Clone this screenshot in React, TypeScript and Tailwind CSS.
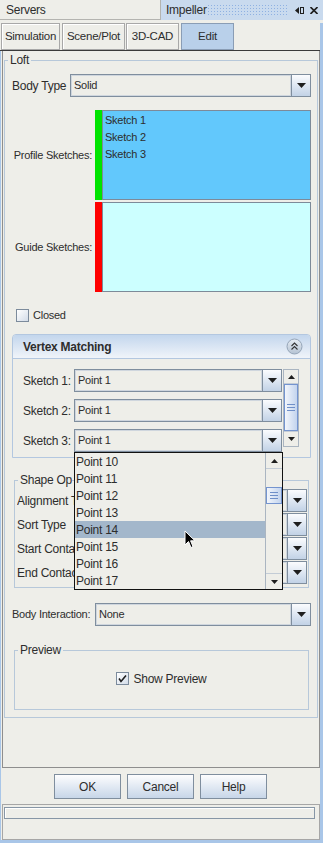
import clsx from "clsx";

const points = ["Point 10", "Point 11", "Point 12", "Point 13", "Point 14", "Point 15", "Point 16", "Point 17"];

function Tri({ up = false }: { up?: boolean }) {
  return (
    <svg width="9" height="5" viewBox="0 0 9 5">
      <path d={up ? "M0 5h9L4.5 0z" : "M0 0h9L4.5 5z"} fill="#1e1e1e" />
    </svg>
  );
}

function SmallTri({ up = false }: { up?: boolean }) {
  return (
    <svg width="7" height="4" viewBox="0 0 7 4">
      <path d={up ? "M0 4h7L3.5 0z" : "M0 0h7L3.5 4z"} fill="#1e1e1e" />
    </svg>
  );
}

function Combo({ value = "", className }: { value?: string; className?: string }) {
  return (
    <div className={clsx("flex h-[23px] border border-[#7f8e9e] bg-[#eeeee9]", className)}>
      <div className="flex min-w-0 flex-1 items-center overflow-hidden whitespace-nowrap border border-[#cfd6de] pl-[2px]">
        {value}
      </div>
      <div className="flex w-[19px] shrink-0 items-center justify-center border-l border-[#7f8e9e] bg-linear-to-b from-[#fbfcfe] to-[#c2d2e6]">
        <Tri />
      </div>
    </div>
  );
}

function Grip() {
  return (
    <div className="flex flex-col gap-[2px]">
      <span className="block h-px w-[8px] bg-[#6f8fc8]" />
      <span className="block h-px w-[8px] bg-[#6f8fc8]" />
      <span className="block h-px w-[8px] bg-[#6f8fc8]" />
    </div>
  );
}

function CheckBox({ checked = false }: { checked?: boolean }) {
  return (
    <div className="flex h-[13px] w-[13px] shrink-0 items-center justify-center border border-[#7c8b9c] bg-linear-to-br from-[#ffffff] to-[#d3dce8]">
      {checked && (
        <svg width="9" height="9" viewBox="0 0 9 9">
          <path d="M1 4.5L3 7.5L8 1.5" fill="none" stroke="#1e1e1e" strokeWidth="1.6" />
        </svg>
      )}
    </div>
  );
}

export default function App() {
  return (
    <div className="relative flex h-[843px] w-[323px] flex-col overflow-hidden bg-[#eeeee9] font-['Liberation_Sans',Arial,sans-serif] text-[11px] tracking-[-0.25px] whitespace-nowrap text-[#2d2d2d]">
      {/* window header */}
      <div className="flex h-[23px] shrink-0 items-start">
        <div className="flex h-[20px] w-[161px] items-center border-r border-b border-[#b4b4b0] pl-[6px] text-[12px]">
          Servers
        </div>
        <div className="flex h-[20px] flex-1 items-center bg-[#c9daee] pl-[5px] text-[12px]">
          <span className="w-[41px]">Impeller</span>
          <div className="h-[13px] w-[80px] bg-[radial-gradient(#8fb1e2_0.8px,transparent_0.9px)] bg-[length:3px_3px]" />
          <div className="ml-[8px] flex items-center gap-[6px]">
            <svg width="9" height="7" viewBox="0 0 9 7">
              <path d="M0 3.5L4 0v7z" fill="#1e1e1e" />
              <rect x="5.5" y="0.5" width="3" height="6" fill="none" stroke="#1e1e1e" />
            </svg>
            <svg width="8" height="7" viewBox="0 0 8 7">
              <path d="M0.5 0L7.5 7M7.5 0L0.5 7" stroke="#1e1e1e" strokeWidth="1.6" />
            </svg>
          </div>
        </div>
      </div>

      <div className="flex flex-1 flex-col border-r-[3px] border-[#a9c6e8]">
        {/* tabs */}
        <div className="flex h-[27px] shrink-0 items-stretch pl-[1px] text-[11.5px]">
          <div className="flex w-[59px] items-center justify-center border border-[#a8a8a8] shadow-[inset_1px_1px_0_#ffffff]">Simulation</div>
          <div className="ml-[2px] flex w-[63px] items-center justify-center border border-[#a8a8a8] shadow-[inset_1px_1px_0_#ffffff]">Scene/Plot</div>
          <div className="ml-[1px] flex w-[53px] items-center justify-center border border-[#a8a8a8] shadow-[inset_1px_1px_0_#ffffff]">3D-CAD</div>
          <div className="ml-[2px] flex w-[53px] items-center justify-center border border-[#8a9db5] bg-[#b9d0ea]">Edit</div>
        </div>
        <div className="h-px shrink-0 bg-[#3a3a3a]" />

        <div className="flex flex-1 flex-col border-l border-b-[3px] border-[#a9c6e8]">
          {/* main panel */}
          <div className="ml-[1px] flex h-[717px] w-[318px] flex-col border-x border-b border-[#8e8e8e] pt-[2px]">
            <fieldset className="mx-[1px] h-[665px] border border-[#b7c8da]">
              <legend className="ml-[3px] px-[2px] text-[12px] leading-[14px]">Loft</legend>
              <div className="flex flex-col pl-[7px] pr-[6px]">
                <div className="mt-[7px] flex items-center">
                  <span className="w-[58px] text-[12px]">Body Type</span>
                  <Combo value="Solid" className="flex-1" />
                </div>

                <div className="mt-[13px] flex h-[90px]">
                  <span className="flex w-[83px] items-center justify-end pr-[3px]">Profile Sketches:</span>
                  <div className="w-[7px] bg-[#00e400]" />
                  <div className="flex flex-1 flex-col border border-[#7d8a99] bg-[#62c8fc] pt-[1px] pl-[2px]">
                    <div className="flex h-[17px] items-center">Sketch 1</div>
                    <div className="flex h-[17px] items-center">Sketch 2</div>
                    <div className="flex h-[17px] items-center">Sketch 3</div>
                  </div>
                </div>

                <div className="mt-[2px] flex h-[90px]">
                  <span className="flex w-[83px] items-center justify-end pr-[3px]">Guide Sketches:</span>
                  <div className="w-[7px] bg-[#ff0000]" />
                  <div className="flex-1 border border-[#7d8a99] bg-[#ccffff]" />
                </div>

                <div className="mt-[17px] flex h-[13px] items-center pl-[4px]">
                  <CheckBox />
                  <span className="ml-[4px]">Closed</span>
                </div>

                {/* Vertex Matching */}
                <div className="mt-[12px] flex flex-col rounded-t-[4px] border border-[#b3c7e0]">
                  <div className="flex h-[24px] items-center justify-between rounded-t-[3px] border-b border-[#b3c7e0] bg-linear-to-b from-[#c3d6ed] to-[#f0f4f9] pr-[7px] pl-[10px]">
                    <span className="text-[12px] font-bold">Vertex Matching</span>
                    <svg width="17" height="17" viewBox="0 0 17 17">
                      <defs>
                        <linearGradient id="cg" x1="0" y1="0" x2="0" y2="1">
                          <stop offset="0" stopColor="#e6ecf3" />
                          <stop offset="1" stopColor="#b5c3d3" />
                        </linearGradient>
                      </defs>
                      <circle cx="8.5" cy="8.5" r="7.5" fill="url(#cg)" stroke="#95a5b8" />
                      <path d="M5.5 8L8.5 5L11.5 8M5.5 11.5L8.5 8.5L11.5 11.5" fill="none" stroke="#333" strokeWidth="1.1" />
                    </svg>
                  </div>
                  <div className="flex pt-[10px] pb-[5px] pl-[10px]">
                    <div className="flex flex-col gap-[7px]">
                      {["Sketch 1:", "Sketch 2:", "Sketch 3:"].map((s) => (
                        <div key={s} className="flex items-center">
                          <span className="w-[51px] text-[12px]">{s}</span>
                          <Combo value="Point 1" className="w-[208px]" />
                        </div>
                      ))}
                    </div>
                    <div className="ml-[1px] flex h-[78px] w-[16px] flex-col border border-[#aab5c1] bg-[#eeeee9]">
                      <div className="flex h-[14px] items-center justify-center border-b border-[#c3ccd6]">
                        <SmallTri up />
                      </div>
                      <div className="flex flex-1 items-center justify-center border border-[#7494cf] bg-linear-to-r from-[#f3f6fb] to-[#c3d4ee]">
                        <Grip />
                      </div>
                      <div className="flex h-[15px] items-center justify-center border-t border-[#c3ccd6]">
                        <SmallTri />
                      </div>
                    </div>
                  </div>
                </div>

                {/* Shape Options */}
                <fieldset className="mx-[2px] mt-[15px] border border-[#b7c8da]">
                  <legend className="ml-[3px] w-[54px] overflow-hidden px-[2px] text-[12px] leading-[14px]">Shape Options</legend>
                  <div className="flex flex-col gap-[1px] pt-[2px] pr-[1px] pb-[3px] pl-[2px]">
                    {["Alignment Type", "Sort Type", "Start Contact", "End Contact"].map((l) => (
                      <div key={l} className="flex items-center">
                        <span className="w-[57px] overflow-hidden text-[12px]">{l}</span>
                        <Combo className="flex-1" />
                      </div>
                    ))}
                  </div>
                </fieldset>

                <div className="mt-[15px] flex items-center">
                  <span className="w-[83px]">Body Interaction:</span>
                  <Combo value="None" className="flex-1" />
                </div>

                {/* Preview */}
                <fieldset className="mx-[2px] mt-[17px] border border-[#b7c8da]">
                  <legend className="ml-[3px] px-[2px] text-[12px] leading-[14px]">Preview</legend>
                  <div className="flex h-[52px] justify-center pt-[15px]">
                    <div className="flex h-[13px] items-center">
                      <CheckBox checked />
                      <span className="ml-[4px] text-[12px]">Show Preview</span>
                    </div>
                  </div>
                </fieldset>
              </div>
            </fieldset>
          </div>

          {/* dialog buttons */}
          <div className="flex h-[36px] shrink-0 justify-center gap-[6px] pt-[6px] text-[12px]">
            {["OK", "Cancel", "Help"].map((b) => (
              <div
                key={b}
                className="flex h-[25px] w-[67px] items-center justify-center border border-[#7f8e9e] bg-linear-to-b from-[#fdfdfe] to-[#c7d6e8]"
              >
                {b}
              </div>
            ))}
          </div>

          {/* status */}
          <div className="ml-[1px] h-[36px] w-[318px] border border-[#a6a6a6] pt-[2px] pl-[1px]">
            <div className="h-[12px] w-[311px] border border-[#8796a6] bg-[#eeeee9] shadow-[inset_1px_1px_0_#ffffff]" />
          </div>
        </div>
      </div>

      {/* open dropdown list */}
      <div className="absolute top-[452px] left-[74px] flex h-[138px] w-[209px] border border-[#111111] bg-[#eeeee9]">
        <div className="flex flex-1 flex-col">
          {points.map((p) => (
            <div
              key={p}
              className={clsx("flex h-[17px] items-center pl-[1px] text-[12px]", p === "Point 14" && "bg-[#a3b7cb]")}
            >
              {p}
            </div>
          ))}
        </div>
        <div className="flex w-[17px] flex-col border-l border-[#aab5c1]">
          <div className="flex h-[16px] items-center justify-center border-b border-[#c3ccd6]">
            <SmallTri up />
          </div>
          <div className="flex-1 pt-[18px]">
            <div className="flex h-[17px] items-center justify-center border border-[#7494cf] bg-linear-to-r from-[#f3f6fb] to-[#c3d4ee]">
              <Grip />
            </div>
          </div>
          <div className="flex h-[16px] items-center justify-center border-t border-[#c3ccd6]">
            <SmallTri />
          </div>
        </div>
      </div>

      {/* mouse pointer */}
      <svg className="absolute top-[530px] left-[184px]" width="12" height="19" viewBox="0 0 12 19">
        <path d="M1 1V15L4.5 11.5L7 17.5L9 16.6L6.6 10.8H11Z" fill="#000" stroke="#fff" strokeWidth="1" />
      </svg>
    </div>
  );
}
